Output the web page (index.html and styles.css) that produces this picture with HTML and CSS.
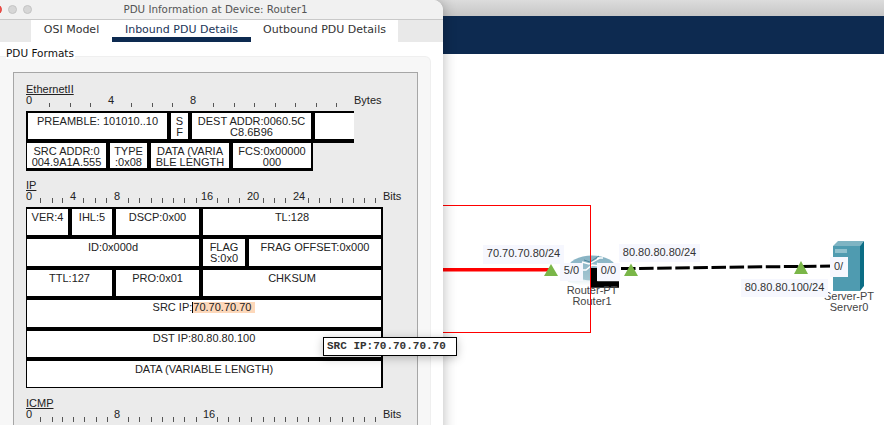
FILE: index.html
```html
<!DOCTYPE html>
<html lang="en">
<head>
<meta charset="utf-8">
<title>PDU Information at Device: Router1</title>
<link rel="stylesheet" href="styles.css">
</head>
<body>
<div class="desktop">
  <div class="app-top"></div>
  <div class="app-nav"></div>

  <svg class="wires" width="884" height="425" viewBox="0 0 884 425" aria-hidden="true">
    <defs>
      <linearGradient id="routerBody" x1="0" y1="0" x2="0" y2="1">
        <stop offset="0" stop-color="#bcd6df"/>
        <stop offset="1" stop-color="#ffffff"/>
      </linearGradient>
      <linearGradient id="routerTop" x1="0" y1="0" x2="0" y2="1">
        <stop offset="0" stop-color="#86b2c3"/>
        <stop offset="1" stop-color="#a5c6d2"/>
      </linearGradient>
    </defs>
    <path d="M568 268V282Q592 290 616 282V268Z" fill="url(#routerBody)"/>
    <ellipse cx="592" cy="268" rx="24" ry="12.5" fill="url(#routerTop)"/>
    <path d="M582 262L589 264L600 258M597 258H603M578 270L586 270L592 265L600 266M597 263L602 266" fill="none" stroke="#ffffff" stroke-width="1.4"/>
    <path d="M584 260L590 262L599 256" fill="none" stroke="#2f6f86" stroke-width=".7"/>
    <path d="M443 269.8H552" stroke="#ff0000" stroke-width="3.4"/>
    <path d="M621 268.6L833 266" stroke="#000000" stroke-width="3" stroke-dasharray="14.5 3.6"/>
    <path d="M594 268V284.5H619" fill="none" stroke="#000000" stroke-width="6.6"/>
    <path d="M833 246H860V291H833Z" fill="#4f9bb0"/>
    <path d="M833 246L838 241H864L860 246Z" fill="#7fb4c3"/>
    <path d="M860 246L864 241V286L860 291Z" fill="#0b6d85"/>
    <path d="M835 249H847V253H835Z" fill="#8fc0cd"/>
    <path d="M544 276L551 264L558 276Z" fill="#7ab648"/>
    <path d="M624 276L631 263.500L638 276Z" fill="#7ab648"/>
    <path d="M794 274L801 261L808 274Z" fill="#7ab648"/>
  </svg>

  <div class="node-name router-name">Router-PT<br>Router1</div>
  <div class="node-name server-name">Server-PT<br>Server0</div>
  <div class="tag ip-a">70.70.70.80/24</div>
  <div class="tag ip-b">80.80.80.80/24</div>
  <div class="tag ip-c">80.80.80.100/24</div>
  <div class="tag port-a">5/0</div>
  <div class="tag port-b">0/0</div>
  <div class="tag port-c">0/</div>
  <div class="red-box"></div>

  <section class="window">
    <header class="titlebar">
      <span class="light light-close"></span>
      <span class="light light-min"></span>
      <span class="light light-max"></span>
      <span class="title">PDU Information at Device: Router1</span>
    </header>
    <nav class="tabs">
      <span class="tab tab-osi">OSI Model</span>
      <span class="tab tab-in">Inbound PDU Details</span>
      <span class="tab tab-out">Outbound PDU Details</span>
    </nav>
    <div class="legend">PDU Formats</div>
    <div class="group">
      <div class="pane">
        <div class="pdu-name">EthernetII</div>
        <svg class="ruler" width="385" height="15" viewBox="0 0 385 15">
          <path class="ticks" d="M23.500 7v4M44.500 7v4M64.500 7v4M105.500 7v4M126.500 7v4M146.500 7v4M187.500 7v4M208.500 7v4M228.500 7v4M249.500 7v4M269.500 7v4M290.500 7v4M310.500 7v4"/>
          <text x="0" y="8">0</text><text x="82" y="8">4</text><text x="164" y="8">8</text><text x="328" y="8">Bytes</text>
        </svg>
        <div class="eth-row eth-row-a">
          <div class="cell c-pre">PREAMBLE: 101010..10</div>
          <div class="cell c-sf">S<br>F</div>
          <div class="cell c-dest">DEST ADDR:0060.5C<br>C8.6B96</div>
          <div class="cell c-blank"></div>
        </div>
        <div class="eth-row eth-row-b">
          <div class="cell c-src">SRC ADDR:0<br>004.9A1A.555</div>
          <div class="cell c-type">TYPE<br>:0x08</div>
          <div class="cell c-data">DATA (VARIA<br>BLE LENGTH</div>
          <div class="cell c-fcs">FCS:0x00000<br>000</div>
        </div>

        <div class="pdu-name pdu-ip">IP</div>
        <svg class="ruler" width="385" height="15" viewBox="0 0 385 15">
          <path class="ticks" d="M14.500 6v5M26.500 6v5M36.500 6v5M57.500 6v5M69.500 6v5M80.500 6v5M102.500 6v5M113.500 6v5M125.500 6v5M136.500 6v5M147.500 6v5M158.500 6v5M170.500 6v5M191.500 6v5M202.500 6v5M213.500 6v5M237.500 6v5M248.500 6v5M259.500 6v5M282.500 6v5M293.500 6v5M304.500 6v5M316.500 6v5M327.500 6v5M338.500 6v5M349.500 6v5"/>
          <text x="0" y="8">0</text><text x="44" y="8">4</text><text x="88" y="8">8</text><text x="175" y="8">16</text><text x="221" y="8">20</text><text x="267" y="8">24</text><text x="357" y="8">Bits</text>
        </svg>
        <div class="ip-table">
          <div class="cell">VER:4</div>
          <div class="cell">IHL:5</div>
          <div class="cell">DSCP:0x00</div>
          <div class="cell span-2">TL:128</div>
          <div class="cell span-3">ID:0x000d</div>
          <div class="cell">FLAG<br>S:0x0</div>
          <div class="cell">FRAG OFFSET:0x000</div>
          <div class="cell span-2">TTL:127</div>
          <div class="cell">PRO:0x01</div>
          <div class="cell span-2">CHKSUM</div>
          <div class="cell span-5 cell-tight">SRC IP:<span class="selected">70.70.70.70</span></div>
          <div class="cell span-5 cell-tight">DST IP:80.80.80.100</div>
          <div class="cell span-5">DATA (VARIABLE LENGTH)</div>
        </div>

        <div class="pdu-name pdu-icmp">ICMP</div>
        <svg class="ruler" width="385" height="15" viewBox="0 0 385 15">
          <path class="ticks" d="M14.500 7v5M26.500 7v5M36.500 7v5M47.500 7v5M58.500 7v5M70.500 7v5M81.500 7v5M102.500 7v5M113.500 7v5M125.500 7v5M136.500 7v5M147.500 7v5M158.500 7v5M170.500 7v5M191.500 7v5M202.500 7v5M213.500 7v5M225.500 7v5M237.500 7v5M248.500 7v5M259.500 7v5M271.500 7v5M282.500 7v5M293.500 7v5M304.500 7v5M316.500 7v5M327.500 7v5M338.500 7v5M349.500 7v5"/>
          <text x="0" y="8">0</text><text x="88" y="8">8</text><text x="177" y="8">16</text><text x="357" y="8">Bits</text>
        </svg>
      </div>
    </div>
  </section>

  <div class="tooltip">SRC IP:70.70.70.70</div>
</div>
</body>
</html>
```

FILE: styles.css
```css
* { box-sizing: border-box; }
html, body { margin: 0; padding: 0; }
body { background: #fff; }

.desktop {
  position: relative;
  width: 884px;
  height: 425px;
  overflow: hidden;
  background: #fff;
  font-family: "Liberation Sans", Arial, sans-serif;
  font-size: 11px;
  color: #222;
}

.app-top {
  height: 16px;
  background: linear-gradient(#dcdcdc, #c6c6c6);
}
.app-nav {
  height: 38px;
  background: #0d2a50;
}

.wires { position: absolute; left: 0; top: 0; }

.node-name {
  position: absolute;
  text-align: center;
  line-height: 11px;
  color: #444;
}
.router-name { left: 562px; top: 285px; width: 60px; }
.server-name { left: 819px; top: 291px; width: 60px; }

.tag {
  position: absolute;
  background: #f6f7fe;
  color: #333;
  line-height: 16px;
  height: 18px;
  text-align: center;
}
.ip-a { left: 483px; top: 245px; width: 81px; height: 19px; }
.ip-b { left: 619px; top: 244px; width: 81px; }
.ip-c { left: 741px; top: 279px; width: 87px; }
.port-a { left: 560px; top: 263px; width: 23px; height: 18px; line-height: 15px; }
.port-b { left: 597px; top: 263px; width: 23px; height: 18px; line-height: 15px; }
.port-c { left: 830px; top: 257px; width: 18px; height: 20px; line-height: 18px; text-align: left; padding-left: 4px; }

.red-box {
  position: absolute;
  left: 400px;
  top: 205px;
  width: 191px;
  height: 128px;
  border: 1px solid #ff0000;
}

.window {
  position: absolute;
  left: 0;
  top: 0;
  width: 443px;
  height: 445px;
  background: #fff;
  border-top-right-radius: 10px;
  box-shadow: 0 0 14px rgba(0, 0, 0, .28);
}

.titlebar {
  position: relative;
  height: 20px;
  background: #f1f1f1;
  border-bottom: 1px solid #c9c9c9;
  border-top-right-radius: 10px;
  text-align: center;
}
.title {
  font-family: "DejaVu Sans", sans-serif;
  font-size: 10.3px;
  line-height: 19px;
  color: #555;
  display: block;
  padding-right: 12px;
}
.light {
  position: absolute;
  top: 5px;
  width: 9px;
  height: 9px;
  border-radius: 50%;
  background: #d6d6d6;
  border: 1px solid #c4c4c4;
}
.light-close { left: -7px; background: #f4524d; border-color: #e0443e; }
.light-min { left: 8px; }
.light-max { left: 23px; }

.tabs {
  display: flex;
  height: 22px;
  padding-left: 31px;
  background: #e9e9e9;
  font-family: "DejaVu Sans", sans-serif;
  font-size: 11px;
  line-height: 16px;
  color: #333;
}
.tab {
  background: #fff;
  text-align: center;
  padding-top: 2px;
}
.tab-osi { width: 81px; }
.tab-in { width: 139px; border-bottom: 5px solid #0d2a50; color: #1b3558; }
.tab-out { width: 147px; }

.legend {
  position: relative;
  z-index: 1;
  display: table;
  margin: 5px 0 -3px 6px;
  padding-right: 1px;
  height: 12px;
  background: #fff;
  font-family: "DejaVu Sans", sans-serif;
  font-size: 10.5px;
  line-height: 12px;
  color: #111;
}

.group {
  width: 431px;
  height: 380px;
  padding: 15px 13px 0 13px;
  background: #f7f7f7;
  border: 1px solid #efefef;
  border-left: 0;
  border-top-right-radius: 6px;
}

.pane {
  width: 405px;
  height: 370px;
  padding: 11px 0 0 12px;
  background: #ebebeb;
  border: 1px solid #a6a6a6;
  color: #222;
  overflow: hidden;
}

.pdu-name {
  height: 12px;
  line-height: 11px;
  text-decoration: underline;
  color: #222;
}
.pdu-ip { margin-top: 9px; }
.pdu-icmp { margin-top: 10px; }

.ruler {
  display: block;
  overflow: visible;
}
.ruler text {
  font-family: "Liberation Sans", Arial, sans-serif;
  font-size: 11px;
  fill: #222;
}
.ticks { stroke: #555; stroke-width: 1; fill: none; }

.cell {
  background: #fff;
  padding-top: 3px;
  text-align: center;
  line-height: 11px;
  color: #222;
  white-space: nowrap;
}
.cell-tight { padding-top: 2px; }

.eth-row {
  display: flex;
  column-gap: 4px;
  background: #000;
}
.eth-row-a { width: 328px; height: 32px; padding: 2px 0 4px 2px; }
.eth-row-b { width: 287px; height: 28px; padding: 0 2px 3px 1px; }
.c-pre { width: 139px; }
.c-sf { width: 17px; }
.c-dest { width: 119px; }
.c-blank { width: 39px; }
.c-src { width: 79px; }
.c-type { width: 37px; }
.c-data { width: 78px; }
.c-fcs { width: 78px; }

.ip-table {
  display: grid;
  grid-template-columns: 41px 40px 83px 42px 132px;
  grid-auto-rows: 26.4px;
  gap: 4px;
  width: 357px;
  height: 181px;
  padding: 2px;
  padding-left: 1px;
  background: #000;
}
.span-2 { grid-column: span 2; }
.span-3 { grid-column: span 3; }
.span-5 { grid-column: span 5; }

.selected {
  display: inline-block;
  height: 11px;
  padding-right: 4px;
  background: #fdd8ba;
  border-left: 1px solid #000;
  vertical-align: top;
}

.tooltip {
  position: absolute;
  left: 323px;
  top: 337px;
  width: 134px;
  height: 19px;
  padding-left: 3px;
  background: #fff;
  border: 1px solid #000;
  box-shadow: 0 2px 10px rgba(0, 0, 0, .25);
  font-family: "Liberation Mono", monospace;
  font-weight: 700;
  font-size: 11px;
  line-height: 17px;
  color: #333;
}
```
